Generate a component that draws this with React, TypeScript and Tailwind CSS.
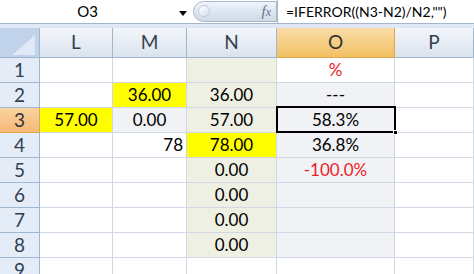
import React from "react";

const font = { fontFamily: "Lato, 'Liberation Sans', sans-serif" };

type Cell = { t?: string; bg?: string; align?: "c" | "r" | "l"; red?: boolean };

const cols = [
  { k: "L", w: "w-[73px]" },
  { k: "M", w: "w-[74px]" },
  { k: "N", w: "w-[90px]" },
  { k: "O", w: "w-[118px]" },
  { k: "P", w: "w-[79px]" },
];

const Y = "bg-[#ffff00]";
const G = "bg-[#eef0e3]";
const S = "bg-[#f0f2f5]";
const W = "bg-white";

const rows: Cell[][] = [
  [{}, {}, { bg: G }, { t: "%", red: true }, {}],
  [{}, { t: "36.00", bg: Y }, { t: "36.00", bg: G }, { t: "---", bg: S }, {}],
  [{ t: "57.00", bg: Y }, { t: "0.00", bg: S }, { t: "57.00", bg: G }, { t: "58.3%", bg: S }, {}],
  [{}, { t: "78", align: "r" }, { t: "78.00", bg: Y }, { t: "36.8%", bg: S }, {}],
  [{}, {}, { t: "0.00", bg: G }, { t: "-100.0%", bg: S, red: true }, {}],
  [{}, {}, { t: "0.00", bg: G }, { bg: S }, {}],
  [{}, {}, { t: "0.00", bg: G }, { bg: S }, {}],
  [{}, {}, { t: "0.00", bg: G }, { bg: S }, {}],
  [{}, {}, {}, {}, {}],
];

export default function App() {
  return (
    <div className="w-[474px] h-[274px] overflow-hidden bg-white relative" style={font}>
      {/* formula bar */}
      <div className="flex h-[24px] border-b border-[#a5b6cc]">
        <div className="w-[191px] flex items-center bg-white relative">
          <div className="w-[175px] text-center text-[15px] text-black leading-none">O3</div>
          <svg width="9" height="6" className="absolute left-[179px] top-[11px]">
            <path d="M0 0 L8 0 L4 5 Z" fill="#000" />
          </svg>
        </div>
        <div className="w-[86px] bg-white flex items-center pl-[2px]">
          <div className="h-[21px] w-full rounded-l-full border border-[#a9b7c9] bg-gradient-to-b from-[#f1f5fb] via-[#dde6f1] to-[#cfdbe9] relative flex items-center justify-end pr-[5px]">
            <div className="absolute left-[4px] top-[3px] w-[12px] h-[12px] rounded-full bg-gradient-to-br from-white to-[#d5dfeb] border border-[#c0cbd8]" />
            <span className="italic text-[15px] text-[#6a7181]" style={{ fontFamily: "'Liberation Serif', serif" }}>
              f<span className="text-[12px]">x</span>
            </span>
          </div>
        </div>
        <div className="flex-1 bg-white flex items-center pl-[8px] text-[14px] text-black leading-none border-l border-[#a9b7c9]">
          =IFERROR((N3-N2)/N2,"")
        </div>
      </div>
      <div className="h-[4px] bg-[#dfe8f4]" />
      {/* column headers */}
      <div className="flex h-[30px]">
        <div className="w-[40px] h-full bg-[#c0d3ea] border-r border-b border-[#9eb6ce] relative overflow-hidden">
          <svg width="40" height="30" className="absolute left-0 top-0">
            <path d="M35 7 L12 27 L35 27 Z" fill="#e0e9f5" />
          </svg>
        </div>
        {cols.map((c) => (
          <div
            key={c.k}
            className={`${c.w} shrink-0 h-full flex items-center justify-center text-[19px] border-r border-b ${
              c.k === "O"
                ? "bg-gradient-to-b from-[#f9dca6] to-[#f1c061] border-[#e0a84a] text-[#333]"
                : "bg-gradient-to-b from-[#f3f6fa] to-[#dae3ee] border-[#9eb6ce] text-[#333f4f]"
            }`}
          >
            {c.k}
          </div>
        ))}
      </div>
      {rows.map((r, i) => (
        <div key={i} className="flex h-[25px]">
          <div
            className={`w-[40px] shrink-0 h-full flex items-center justify-center text-[19px] border-r border-b ${
              i === 2
                ? "bg-gradient-to-b from-[#f9d3a0] to-[#f5b877] border-[#e0a84a] text-[#333]"
                : "bg-[#e4ecf7] border-[#9eb6ce] text-[#333f4f]"
            }`}
          >
            {i + 1}
          </div>
          {r.map((c, j) => (
            <div
              key={j}
              className={`${cols[j].w} shrink-0 h-full flex items-center border-r border-b border-[#d0d7e5] text-[17px] ${
                c.bg ?? W
              } ${c.align === "r" ? "justify-end pr-[3px]" : "justify-center"} ${
                c.red ? "text-[#ee1c25]" : "text-black"
              }`}
            >
              {c.t}
            </div>
          ))}
        </div>
      ))}
      {/* selection */}
      <div className="absolute left-[276px] top-[106px] w-[120px] h-[27px] border-2 border-black" />
      <div className="absolute left-[393px] top-[130px] w-[5px] h-[5px] bg-black border border-white" />
    </div>
  );
}
